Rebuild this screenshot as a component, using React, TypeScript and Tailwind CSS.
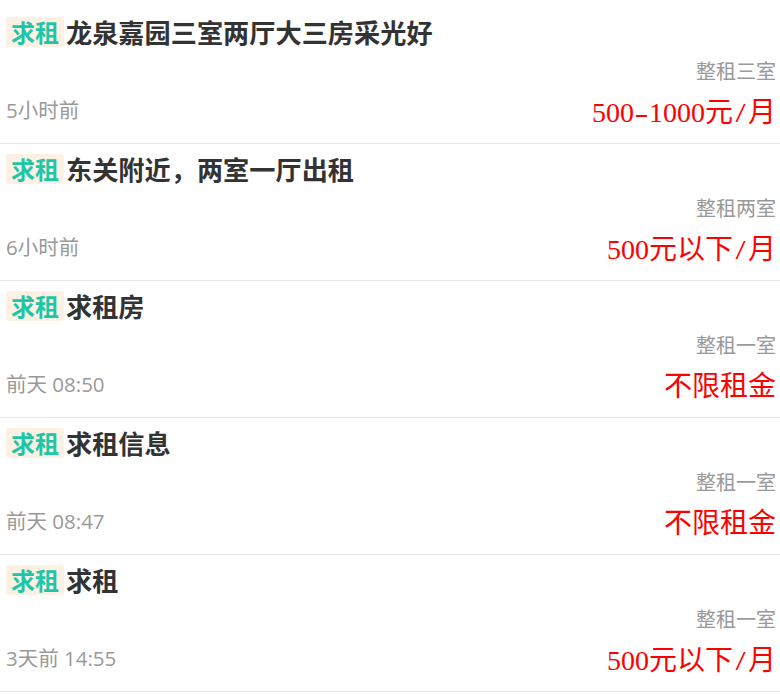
const posts = [
  { title: "龙泉嘉园三室两厅大三房采光好", type: "整租三室", time: "5小时前", price: "500-1000元/月" },
  { title: "东关附近，两室一厅出租", type: "整租两室", time: "6小时前", price: "500元以下/月" },
  { title: "求租房", type: "整租一室", time: "前天 08:50", price: "不限租金" },
  { title: "求租信息", type: "整租一室", time: "前天 08:47", price: "不限租金" },
  { title: "求租", type: "整租一室", time: "3天前 14:55", price: "500元以下/月" },
];

const Price = ({ text }: { text: string }) => (
  <>
    {text.split(/([-/])/).map((s, i) =>
      s === "-" || s === "/" ? (
        <span key={i} className={`inline-block w-[15px] text-center ${s === "-" ? "scale-x-[1.5]" : "scale-x-[1.3]"}`}>
          {s}
        </span>
      ) : (
        <span key={i}>{s}</span>
      )
    )}
  </>
);

export default function App() {
  return (
    <div className="w-[780px] h-[694px] bg-white pt-[7px] overflow-hidden font-[family-name:'Open_Sans','Noto_Sans_CJK_SC',sans-serif]">
      {posts.map((p, i) => (
        <div key={i} className="border-b border-[#e6e6e6] pl-[6px] pr-[4px] pt-[10px] pb-[12px]">
          <div className="flex items-center h-[30px]">
            <span className="bg-[#fdf1e3] text-[#1cc6a6] rounded-[3px] px-[5px] h-[30px] leading-[30px] text-[24px] font-bold font-[family-name:'Noto_Sans_CJK_SC',sans-serif]">
              求租
            </span>
            <span className="ml-[2px] text-[26.2px] leading-[30px] font-bold text-[#333] font-[family-name:'Noto_Sans_CJK_SC',sans-serif]">
              {p.title}
            </span>
          </div>
          <div className="flex justify-between items-end">
            <span className="text-[20.5px] leading-[24px] text-[#999] mb-[9px]">{p.time}</span>
            <div className="flex flex-col items-end">
              <span className="mt-[10px] text-[20px] leading-[28px] text-[#999] font-[family-name:'Noto_Sans_CJK_SC',sans-serif]">
                {p.type}
              </span>
              <span className="mt-[10px] text-[28px] leading-[36px] text-[#ff0000] font-[family-name:'Liberation_Serif','Noto_Sans_CJK_SC',serif]">
                <Price text={p.price} />
              </span>
            </div>
          </div>
        </div>
      ))}
    </div>
  );
}
